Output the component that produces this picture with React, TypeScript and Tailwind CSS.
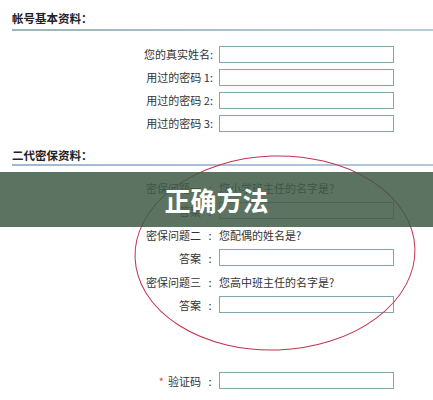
const font = { fontFamily: '"Noto Sans CJK SC", "Noto Sans", sans-serif' }

function Field({ label }: { label: string }) {
  return (
    <div className="flex h-[17px] items-center">
      <div className="w-[213px] text-right text-[11px] leading-[17px] text-[#333]">{label}</div>
      <div className="ml-[6px] h-[17px] w-[175px] border border-[#7fa8ae] bg-white" />
    </div>
  )
}

function Row({ label, children }: { label: React.ReactNode; children: React.ReactNode }) {
  return (
    <div className="flex items-center text-[11px] text-[#333]">
      <div className="w-[201px] text-right leading-[16px]">{label}</div>
      <div className="w-[18px] text-center leading-[16px]">:</div>
      {children}
    </div>
  )
}

function Answer() {
  return <div className="h-[17px] w-[175px] border border-[#7fa8ae] bg-white" />
}

export default function App() {
  return (
    <div className="relative h-[400px] w-[433px] overflow-hidden bg-white" style={font}>
      <div className="ml-[12px] pt-[10px]">
        <div className="text-[11.5px] font-bold leading-[16px] text-[#222]">帐号基本资料：</div>
        <div className="mt-[3px] h-[2px] bg-gradient-to-r from-[#9db4bd] to-[#b9cdd4]" />
      </div>

      <div className="mt-[15px] flex flex-col gap-[6px]">
        <Field label="您的真实姓名:" />
        <Field label="用过的密码 1:" />
        <Field label="用过的密码 2:" />
        <Field label="用过的密码 3:" />
      </div>

      <div className="ml-[12px] mt-[15px]">
        <div className="text-[11.5px] font-bold leading-[16px] text-[#222]">二代密保资料：</div>
        <div className="mt-[1px] h-[2px] bg-gradient-to-r from-[#9fb8d2] to-[#b3c8de]" />
      </div>

      <div className="mt-[14px] flex flex-col">
        <Row label="密保问题一">
          <span className="leading-[16px]">您小学班主任的名字是?</span>
        </Row>
        <div className="mt-[6px]">
          <Row label="答案">
            <Answer />
          </Row>
        </div>
        <div className="mt-[8px]">
          <Row label="密保问题二">
            <span className="leading-[16px]">您配偶的姓名是?</span>
          </Row>
        </div>
        <div className="mt-[6px]">
          <Row label="答案">
            <Answer />
          </Row>
        </div>
        <div className="mt-[8px]">
          <Row label="密保问题三">
            <span className="leading-[16px]">您高中班主任的名字是?</span>
          </Row>
        </div>
        <div className="mt-[6px]">
          <Row label="答案">
            <Answer />
          </Row>
        </div>
        <div className="mt-[59px]">
          <Row
            label={
              <span>
                <span className="mr-[4px] text-[#e04a4a]">*</span>验证码
              </span>
            }
          >
            <Answer />
          </Row>
        </div>
      </div>

      <svg className="pointer-events-none absolute left-0 top-0" width="433" height="400">
        <ellipse
          cx="275"
          cy="253"
          rx="140"
          ry="97"
          fill="none"
          stroke="#c3324f"
          strokeWidth="1"
          transform="rotate(-2 275 253)"
        />
      </svg>

      <div className="absolute left-0 top-[172px] flex h-[55px] w-full items-center justify-center bg-[#3f5a47]/85">
        <span className="text-[26px] font-bold leading-none tracking-[0px] text-white">正确方法</span>
      </div>
    </div>
  )
}
